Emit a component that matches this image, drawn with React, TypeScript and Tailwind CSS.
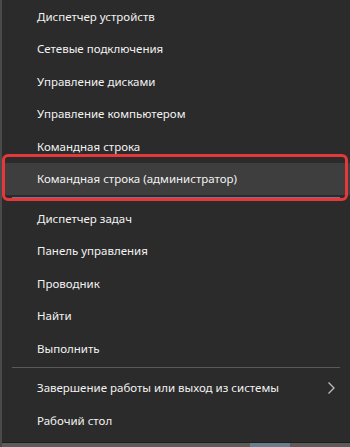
import React from "react";

const Item = ({ label, highlight, chevron }: { label: string; highlight?: boolean; chevron?: boolean }) => (
  <div
    className={`h-[32.5px] flex items-center pl-[35px] pr-[12px] text-[11.5px] text-[#f2f2f2] ${highlight ? "bg-[#3e3e3e]" : ""}`}
  >
    <span className="flex-1 whitespace-nowrap">{label}</span>
    {chevron && (
      <svg width="9" height="14" viewBox="0 0 9 14" className="mr-[2px]">
        <path d="M1.5 1.5 L7 7 L1.5 12.5" fill="none" stroke="#bdbdbd" strokeWidth="1.3" />
      </svg>
    )}
  </div>
);

const Sep = ({ tint }: { tint?: boolean }) => (
  <div className="h-[7px] flex items-start pt-[2px] px-[10px]">
    <div className={`h-px w-full ${tint ? "bg-[#7a7290]" : "bg-[#5a5a5a]"}`} />
  </div>
);

export default function App() {
  return (
    <div
      className="relative w-[350px] h-[447px] bg-[#2b2b2b] border-l-2 border-[#4a4a4a] overflow-hidden"
      style={{ fontFamily: '"Noto Sans", "Open Sans", sans-serif' }}
    >
      <div className="flex flex-col">
        <Item label="Диспетчер устройств" />
        <Item label="Сетевые подключения" />
        <Item label="Управление дисками" />
        <Item label="Управление компьютером" />
        <Item label="Командная строка" />
        <Item label="Командная строка (администратор)" highlight />
        <Sep tint />
        <Item label="Диспетчер задач" />
        <Item label="Панель управления" />
        <Item label="Проводник" />
        <Item label="Найти" />
        <Item label="Выполнить" />
        <Sep />
        <Item label="Завершение работы или выход из системы" chevron />
        <Item label="Рабочий стол" />
      </div>
      <div className="absolute left-[0px] top-[154px] w-[346px] h-[47px] border-[3px] border-[#e5383b] rounded-[6px]" />
      <div className="absolute left-0 right-0 bottom-0 h-[5px] bg-[#5c5c5c] border-t border-[#1e1e1e]">
        <div className="absolute left-[248px] w-[40px] top-0 bottom-0 bg-[#6a7d8c]" />
      </div>
    </div>
  );
}
